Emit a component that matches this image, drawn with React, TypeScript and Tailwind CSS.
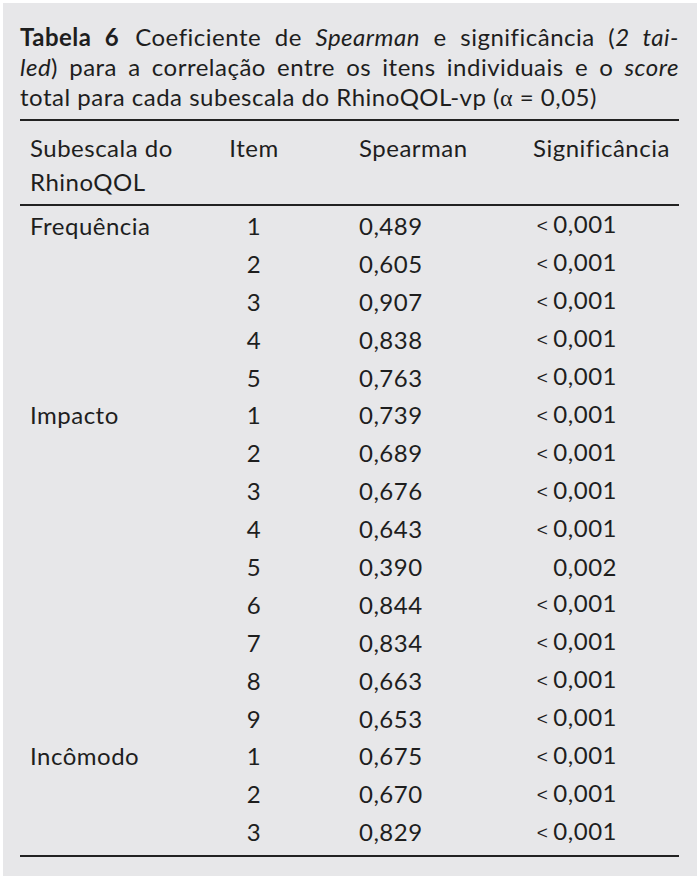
const rows: { group?: string; item: number; rho: string; sig: string; lt: boolean }[] = [
  { group: 'Frequência', item: 1, rho: '0,489', sig: '0,001', lt: true },
  { item: 2, rho: '0,605', sig: '0,001', lt: true },
  { item: 3, rho: '0,907', sig: '0,001', lt: true },
  { item: 4, rho: '0,838', sig: '0,001', lt: true },
  { item: 5, rho: '0,763', sig: '0,001', lt: true },
  { group: 'Impacto', item: 1, rho: '0,739', sig: '0,001', lt: true },
  { item: 2, rho: '0,689', sig: '0,001', lt: true },
  { item: 3, rho: '0,676', sig: '0,001', lt: true },
  { item: 4, rho: '0,643', sig: '0,001', lt: true },
  { item: 5, rho: '0,390', sig: '0,002', lt: false },
  { item: 6, rho: '0,844', sig: '0,001', lt: true },
  { item: 7, rho: '0,834', sig: '0,001', lt: true },
  { item: 8, rho: '0,663', sig: '0,001', lt: true },
  { item: 9, rho: '0,653', sig: '0,001', lt: true },
  { group: 'Incômodo', item: 1, rho: '0,675', sig: '0,001', lt: true },
  { item: 2, rho: '0,670', sig: '0,001', lt: true },
  { item: 3, rho: '0,829', sig: '0,001', lt: true },
];

export default function App() {
  return (
    <div className="w-[700px] h-[879px] bg-white p-[3px]">
      <div
        className="h-full bg-[#e7e7e9] pl-[17px] pr-[18px] pt-[19px] text-[24px] tracking-[0.5px] text-[#1e1e1e] leading-[30px]"
        style={{ fontFamily: 'Lato, "Open Sans", sans-serif' }}
      >
        {/* caption */}
        <div className="text-justify [text-align-last:justify]">
          <span className="font-bold">Tabela 6</span>
          <span className="ml-4">Coeficiente de <i>Spearman</i> e significância (<i>2 tai-</i></span>
        </div>
        <div className="text-justify [text-align-last:justify]">
          <i>led</i>) para a correlação entre os itens individuais e o <i>score</i>
        </div>
        <div>
          total para cada subescala do RhinoQOL-vp (<span className="font-['Liberation_Serif',serif]">α</span> = 0,05)
        </div>

        <div className="mt-[6px] border-t-2 border-[#222]" />

        {/* header */}
        <div className="flex pt-[10px] pb-[5px] leading-[34px] border-b-2 border-[#222]">
          <div className="w-[209px] pl-[10px]">
            Subescala do
            <br />
            RhinoQOL
          </div>
          <div className="w-[50px] text-center">Item</div>
          <div className="w-[254px] pl-[80px]">Spearman</div>
          <div className="whitespace-nowrap">Significância</div>
        </div>

        {/* body */}
        <div className="pt-[1px] pb-[4px] border-b-2 border-[#222]">
          {rows.map((r, i) => (
            <div key={i} className="flex h-[37.9px] items-center">
              <div className="w-[209px] pl-[10px]">{r.group ?? ''}</div>
              <div className="w-[50px] text-center">{r.item}</div>
              <div className="w-[254px] pl-[80px]">{r.rho}</div>
              <div className="w-[84px] text-right whitespace-nowrap">
                {r.lt && (
                  <span className="text-[19px] mr-[5px] relative -top-[1px] font-['Liberation_Sans',sans-serif]">
                    &lt;
                  </span>
                )}
                {r.sig}
              </div>
            </div>
          ))}
        </div>
      </div>
    </div>
  );
}
